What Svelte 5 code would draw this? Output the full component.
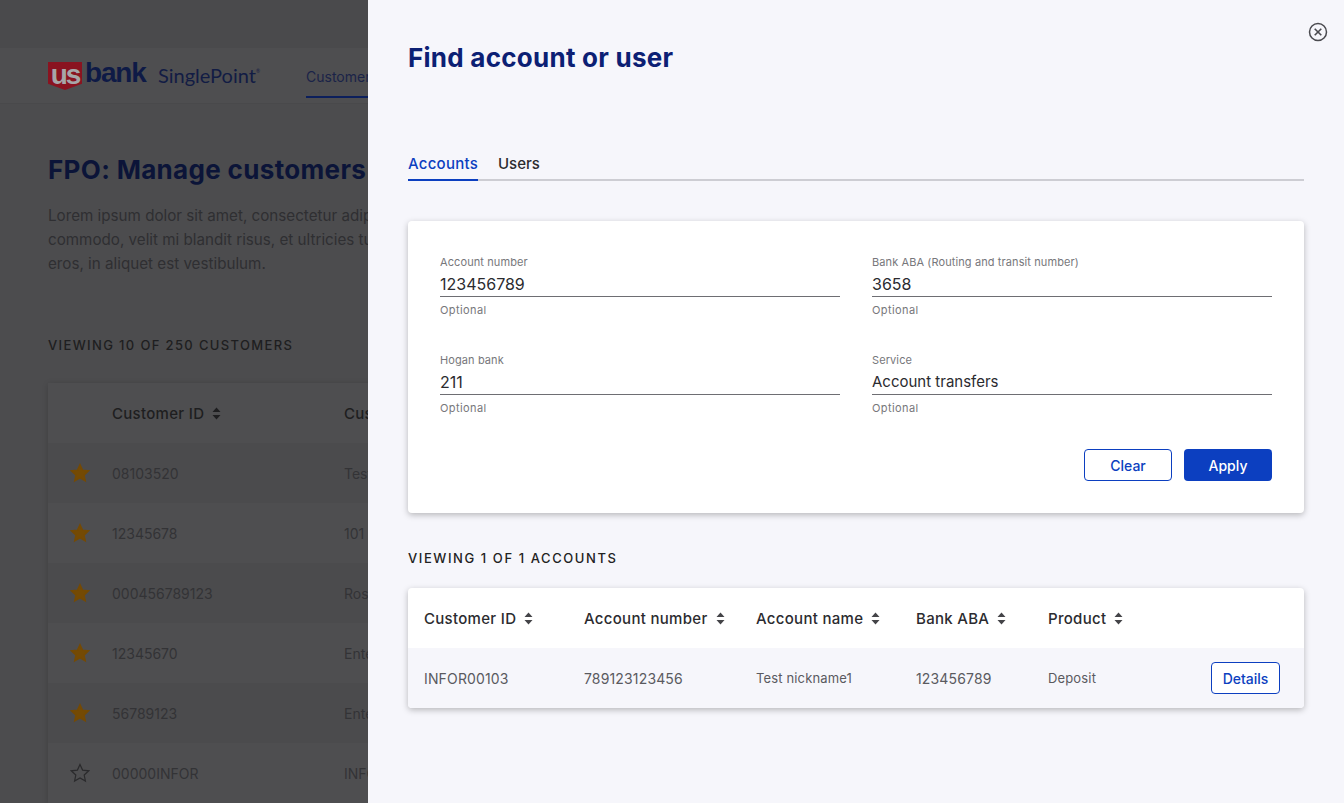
<script>
  const rows = [
    ['08103520', 'Test', true],
    ['12345678', '101', true],
    ['000456789123', 'Ross', true],
    ['12345670', 'Ente', true],
    ['56789123', 'Ente', true],
    ['00000INFOR', 'INFO', false]
  ];
  const fields = [
    ['Account number', '123456789'],
    ['Bank ABA (Routing and transit number)', '3658'],
    ['Hogan bank', '211'],
    ['Service', 'Account transfers']
  ];
  const heads = [
    ['Customer ID', 160],
    ['Account number', 172],
    ['Account name', 160],
    ['Bank ABA', 132],
    ['Product', 120]
  ];
  const cells = ['INFOR00103', '789123123456', 'Test nickname1', '123456789', 'Deposit'];
  const star = 'M10 1.500l2.600 5.600 6.100.7-4.500 4.200 1.200 6-5.400-3-5.400 3 1.200-6L1.300 7.800l6.100-.7z';
  const hasDigits = (s) => /\d{3}/.test(s);
</script>

{#snippet sort()}
  <svg class="sort" width="9" height="13" viewBox="0 0 9 13" aria-hidden="true">
    <path d="M4.500 0.500L8.500 5H0.500zM4.500 12.500L0.500 8H8.500z" />
  </svg>
{/snippet}

<div class="page">
  <div class="topstrip"></div>
  <header class="masthead">
    <div class="logo">
      <span class="shield">us</span><span class="bank">bank</span><span class="sp">SinglePoint<sup>®</sup></span>
    </div>
    <nav class="mainnav"><span class="navitem">Customers</span></nav>
  </header>
  <main class="content">
    <h1>FPO: Manage customers</h1>
    <p>Lorem ipsum dolor sit amet, consectetur adipiscing elit. Donec<br />commodo, velit mi blandit risus, et ultricies turpis nulla vitae<br />eros, in aliquet est vestibulum.</p>
    <h2>VIEWING 10 OF 250 CUSTOMERS</h2>
    <div class="bgtable">
      <div class="bgrow bghead">
        <span class="bgstar"></span>
        <span class="bgid">Customer ID {@render sort()}</span>
        <span>Customer name</span>
      </div>
      {#each rows as r}
        <div class="bgrow">
          <span class="bgstar">
            <svg width="20" height="20" viewBox="0 0 20 20" aria-hidden="true">
              <path d={star} fill={r[2] ? '#744a04' : 'none'} stroke={r[2] ? '#744a04' : '#2a2a2c'} stroke-width="1.200" />
            </svg>
          </span>
          <span class="bgid">{r[0]}</span>
          <span>{r[1]}</span>
        </div>
      {/each}
    </div>
  </main>
</div>

<aside class="drawer">
  <button class="close" aria-label="Close">
    <svg width="20" height="20" viewBox="0 0 20 20" aria-hidden="true">
      <circle cx="10" cy="10" r="8.500" fill="none" stroke="#4a4a4f" stroke-width="1.500" />
      <path d="M6.700 6.700l6.600 6.600M13.300 6.700l-6.600 6.600" fill="none" stroke="#4a4a4f" stroke-width="1.600" />
    </svg>
  </button>
  <h1 class="title">Find account or user</h1>
  <div class="tabs">
    <span class="tab active">Accounts</span>
    <span class="tab">Users</span>
  </div>
  <section class="card form">
    <div class="grid">
      {#each fields as f}
        <div class="field">
          <div class="label">{f[0]}</div>
          <div class="value" class:num={/^\d+$/.test(f[1])}>{f[1]}</div>
          <div class="hint">Optional</div>
        </div>
      {/each}
    </div>
    <div class="actions">
      <button class="btn outline wide">Clear</button>
      <button class="btn solid wide">Apply</button>
    </div>
  </section>
  <h2 class="viewing">VIEWING 1 OF 1 ACCOUNTS</h2>
  <section class="card results">
    <div class="thead">
      {#each heads as h}
        <div class="th" style="width:{h[1]}px">{h[0]} {@render sort()}</div>
      {/each}
    </div>
    <div class="tbody">
      {#each cells as c, i}
        <div class="td" class:num={hasDigits(c)} style="width:{heads[i][1]}px">{c}</div>
      {/each}
      <button class="btn outline details">Details</button>
    </div>
  </section>
</aside>

<style>
  :global(body) {
    margin: 0;
    overflow: hidden;
    font-family: Inter, "Liberation Sans", sans-serif;
    background: #4c4c4e;
  }
  .page {
    height: 803px;
    overflow: hidden;
    background: #4c4c4e;
  }
  .topstrip {
    height: 48px;
    background: #4a4a4c;
  }
  .masthead {
    height: 56px;
    box-sizing: border-box;
    padding-left: 48px;
    display: flex;
    align-items: flex-start;
    background: #4e4e50;
    border-bottom: 1px solid #49494b;
  }
  .logo {
    display: flex;
    align-items: flex-start;
    width: 258px;
    padding-top: 14px;
  }
  .shield {
    width: 34px;
    height: 28px;
    box-sizing: border-box;
    background: #8a1320;
    color: #a6a6a8;
    font: 700 28px/25px "Liberation Sans", sans-serif;
    letter-spacing: -2px;
    text-align: center;
    clip-path: polygon(0 0, 100% 0, 100% 78%, 50% 100%, 0 78%);
  }
  .bank {
    font: 700 28px/22px "Liberation Sans", sans-serif;
    letter-spacing: -1.200px;
    color: #0e1a46;
    margin-left: 3px;
    width: 64px;
  }
  .sp {
    font: 400 20px/26px Lato, sans-serif;
    color: #121c44;
    margin-left: 9px;
    white-space: nowrap;
  }
  .sp sup {
    font-size: 5px;
    line-height: 0;
    vertical-align: 10px;
  }
  .mainnav {
    display: flex;
  }
  .navitem {
    font-size: 14px;
    color: #1a2348;
    display: flex;
    align-items: center;
    height: 50px;
    box-sizing: border-box;
    padding-top: 8px;
    border-bottom: 2px solid #0c1f5c;
    width: 80px;
    overflow: hidden;
    white-space: nowrap;
  }
  .content {
    padding: 48px 48px 0;
  }
  .content h1 {
    margin: 0;
    font-size: 26px;
    line-height: 36px;
    font-weight: 700;
    letter-spacing: 0.330px;
    color: #0b1438;
    white-space: nowrap;
  }
  .content p {
    margin: 16px 0 0;
    font-size: 15.200px;
    line-height: 24px;
    color: #2f2f32;
    white-space: nowrap;
  }
  .content h2 {
    margin: 59px 0 0;
    font-size: 13px;
    line-height: 20px;
    font-weight: 500;
    letter-spacing: 1.360px;
    color: #1e1e20;
  }
  .bgtable {
    margin-top: 28px;
    background: #4e4e50;
    border-radius: 4px 4px 0 0;
    box-shadow: 0 1px 6px rgba(0, 0, 0, 0.18);
    width: 700px;
  }
  .bgrow {
    height: 60px;
    display: flex;
    align-items: center;
    font-size: 14px;
    color: #333336;
    background: #4e4e50;
  }
  .bgrow:nth-child(even) {
    background: #4b4b4d;
  }
  .bghead {
    font-size: 15px;
    font-weight: 500;
    letter-spacing: 0.3px;
    color: #1e1e20;
  }
  .bgstar {
    width: 64px;
    display: flex;
    justify-content: center;
  }
  .bgid {
    width: 232px;
    display: flex;
    align-items: center;
    gap: 8px;
  }
  .sort {
    fill: #444448;
    flex: none;
  }
  .bghead .sort {
    fill: #1e1e20;
  }
  .drawer {
    position: absolute;
    top: 0;
    left: 368px;
    width: 976px;
    height: 803px;
    box-sizing: border-box;
    padding: 0 40px;
    background: #f6f6fb;
  }
  .close {
    position: absolute;
    top: 22px;
    right: 16px;
    width: 20px;
    height: 20px;
    padding: 0;
    border: 0;
    background: none;
    display: block;
  }
  .title {
    margin: 0;
    padding-top: 40px;
    font-size: 26px;
    line-height: 36px;
    font-weight: 700;
    letter-spacing: 0.260px;
    color: #0c2074;
  }
  .tabs {
    margin-top: 76px;
    display: flex;
    gap: 20px;
    border-bottom: 2px solid #cdcdd3;
    height: 27px;
  }
  .tab {
    font-size: 15px;
    line-height: 24px;
    font-weight: 500;
    color: #2b2b2f;
    box-sizing: border-box;
  }
  .tab.active {
    color: #0c3fc0;
    letter-spacing: 0.250px;
    border-bottom: 2px solid #0c3fc0;
    height: 29px;
  }
  .card {
    background: #fff;
    border-radius: 4px;
    box-shadow: 0 2px 6px rgba(0, 0, 0, 0.26);
  }
  .form {
    margin-top: 40px;
    height: 292px;
    box-sizing: border-box;
    padding: 32px;
  }
  .grid {
    display: grid;
    grid-template-columns: 400px 400px;
    column-gap: 32px;
    row-gap: 32px;
  }
  .field {
    height: 66px;
  }
  .label {
    font-size: 11px;
    line-height: 18px;
    letter-spacing: 0.1px;
    color: #77777b;
  }
  .value {
    font-size: 15px;
    line-height: 26px;
    height: 26px;
    box-sizing: border-box;
    color: #2b2b2f;
    border-bottom: 1px solid #6e6e73;
  }
  .value.num {
    font-size: 16px;
  }
  .hint {
    margin-top: 4px;
    font-size: 11px;
    line-height: 18px;
    letter-spacing: 0.4px;
    color: #77777b;
  }
  .actions {
    display: flex;
    justify-content: flex-end;
    gap: 12px;
    margin-top: 32px;
  }
  .btn {
    font-family: inherit;
    font-size: 14px;
    font-weight: 500;
    border-radius: 4px;
    box-sizing: border-box;
    height: 32px;
    padding: 0;
  }
  .wide {
    width: 88px;
  }
  .outline {
    background: #fff;
    color: #0c3fc0;
    border: 1px solid #0c3fc0;
  }
  .solid {
    background: #0c3fc0;
    color: #fff;
    border: 0;
  }
  .viewing {
    margin: 35px 0 0;
    font-size: 13px;
    line-height: 20px;
    font-weight: 500;
    letter-spacing: 1.580px;
    color: #222;
  }
  .results {
    margin-top: 20px;
    height: 120px;
    overflow: hidden;
  }
  .thead,
  .tbody {
    display: flex;
    align-items: center;
    padding: 0 24px 0 16px;
    height: 60px;
  }
  .tbody {
    background: #f6f6fb;
  }
  .th {
    font-size: 15px;
    font-weight: 500;
    letter-spacing: 0.3px;
    color: #2b2b2f;
    display: flex;
    align-items: center;
    gap: 8px;
    flex: none;
  }
  .td {
    font-size: 13px;
    letter-spacing: 0.15px;
    color: #5a5a5f;
    flex: none;
  }
  .td.num {
    font-size: 14px;
  }
  .details {
    width: 69px;
    margin-left: auto;
  }
</style>
